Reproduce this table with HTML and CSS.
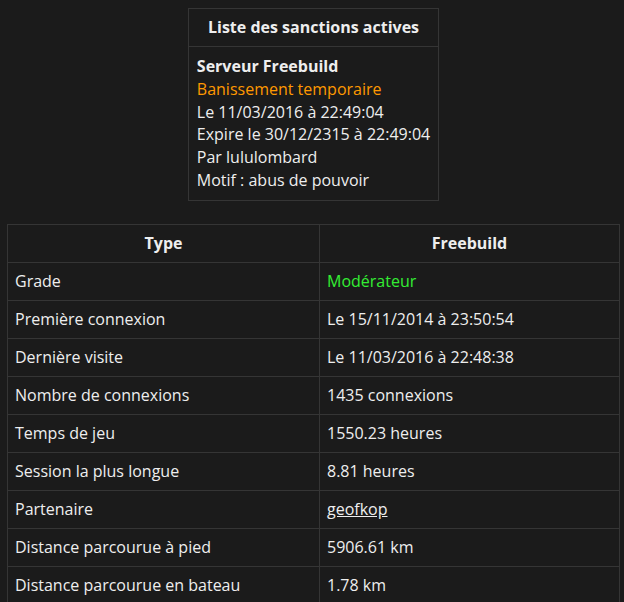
FILE: index.html
```html
<!DOCTYPE html>
<html lang="fr">
  <head>
    <meta charset="UTF-8" />
    <title>Profil joueur</title>
    <link rel="stylesheet" href="styles.css">
  </head>
  <body>
    <div class="page">
      <div class="sanctions-wrap">
        <div class="sanctions">
          <div class="sanctions-title">Liste des sanctions actives</div>
          <div class="sanctions-body">
            <div class="server">Serveur Freebuild</div>
            <div class="ban">Banissement temporaire</div>
            <div>Le 11/03/2016 à 22:49:04</div>
            <div>Expire le 30/12/2315 à 22:49:04</div>
            <div>Par lululombard</div>
            <div>Motif : abus de pouvoir</div>
          </div>
        </div>
      </div>

      <table class="stats">
        <thead>
          <tr>
            <th class="col-type">Type</th>
            <th>Freebuild</th>
          </tr>
        </thead>
        <tbody>
          <tr><td>Grade</td><td class="grade">Modérateur</td></tr>
          <tr><td>Première connexion</td><td>Le 15/11/2014 à 23:50:54</td></tr>
          <tr><td>Dernière visite</td><td>Le 11/03/2016 à 22:48:38</td></tr>
          <tr><td>Nombre de connexions</td><td>1435 connexions</td></tr>
          <tr><td>Temps de jeu</td><td>1550.23 heures</td></tr>
          <tr><td>Session la plus longue</td><td>8.81 heures</td></tr>
          <tr><td>Partenaire</td><td><a href="#">geofkop</a></td></tr>
          <tr><td>Distance parcourue à pied</td><td>5906.61 km</td></tr>
          <tr><td>Distance parcourue en bateau</td><td>1.78 km</td></tr>
        </tbody>
      </table>
    </div>
  </body>
</html>
```
FILE: styles.css
```css
* {
  margin: 0;
  padding: 0;
  box-sizing: border-box;
}

body {
  background-color: #1b1b1b;
  color: #eeeeee;
  font-family: "Open Sans", sans-serif;
  font-size: 16px;
}

.page {
  padding: 8px 4px 0 7px;
}

.sanctions-wrap {
  display: flex;
  justify-content: center;
  margin-bottom: 23px;
}

.sanctions {
  border: 1px solid #353535;
}

.sanctions-title {
  text-align: center;
  font-weight: bold;
  line-height: 21px;
  padding: 8px;
  border-bottom: 1px solid #353535;
}

.sanctions-body {
  padding: 8px;
  line-height: 22.8px;
}

.server {
  font-weight: bold;
}

.ban {
  color: #ff9900;
}

.stats {
  width: 100%;
  border-collapse: collapse;
}

.stats th,
.stats td {
  border: 1px solid #353535;
  padding: 8px 7px;
  line-height: 21px;
  text-align: left;
}

.stats th {
  text-align: center;
  font-weight: bold;
}

.col-type {
  width: 312px;
}

.grade {
  color: #33ee33;
}

.stats a {
  color: #eeeeee;
  text-decoration: underline;
}
```
